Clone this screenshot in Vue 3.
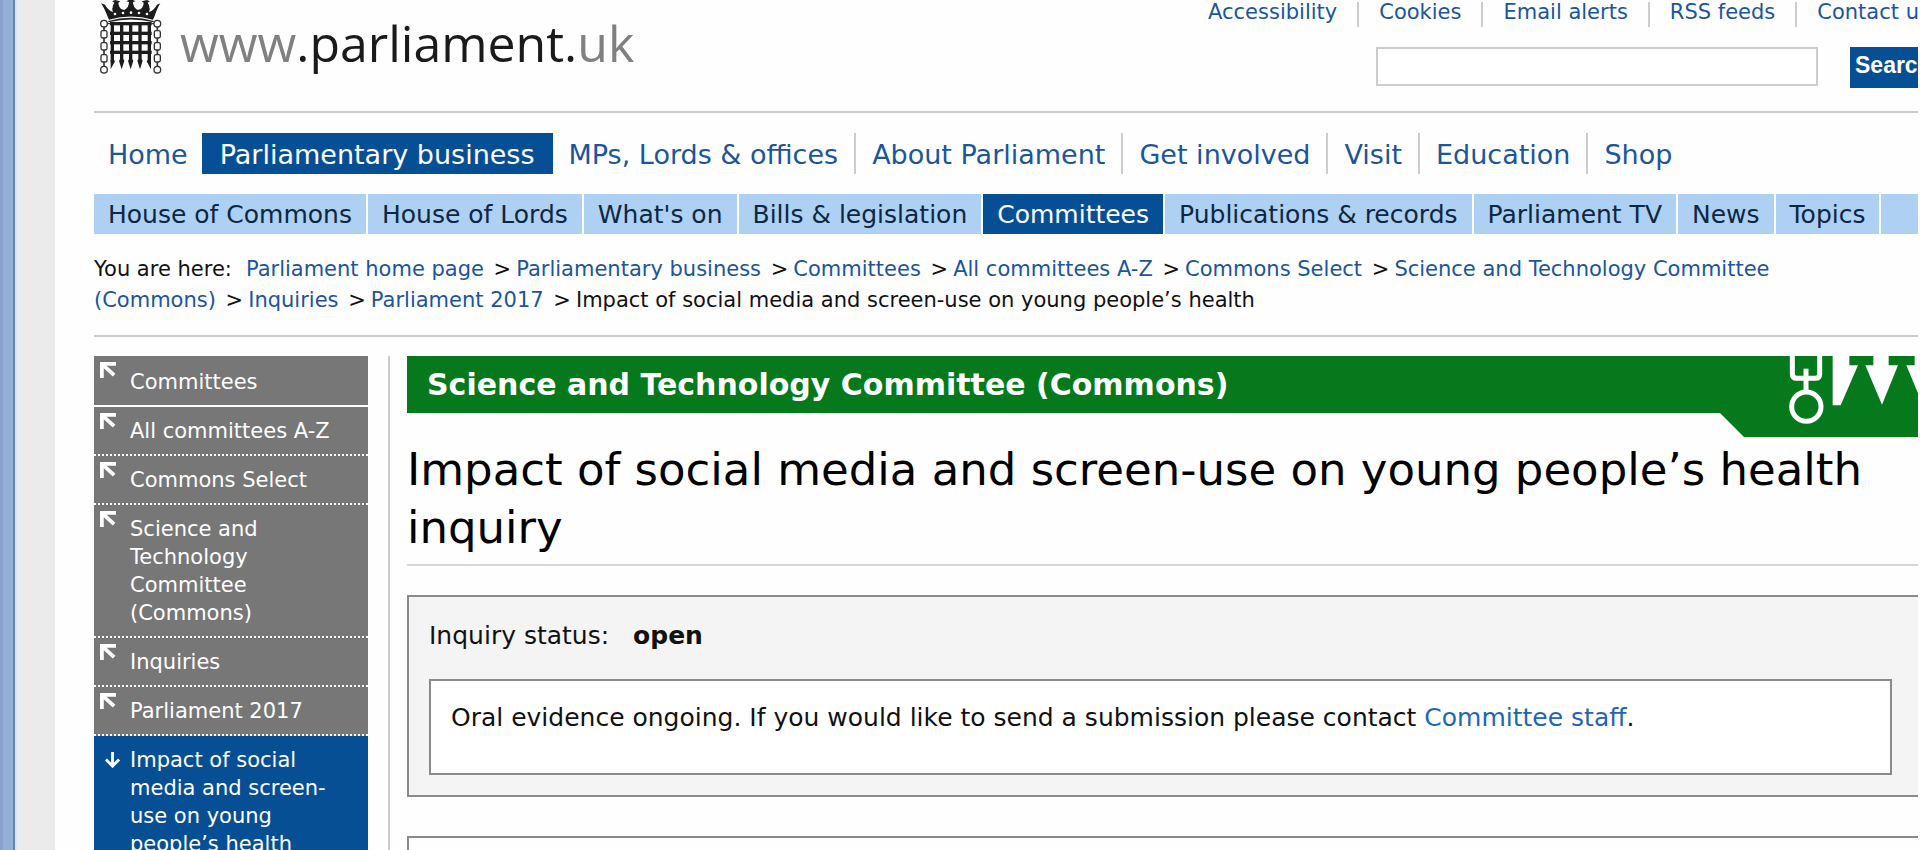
<script setup>
const topLinks = ['Accessibility', 'Cookies', 'Email alerts', 'RSS feeds', 'Contact us']

const mainNav = [
  { label: 'Home' },
  { label: 'Parliamentary business', active: true },
  { label: 'MPs, Lords & offices' },
  { label: 'About Parliament' },
  { label: 'Get involved' },
  { label: 'Visit' },
  { label: 'Education' },
  { label: 'Shop' },
]

const subNav = [
  { label: 'House of Commons' },
  { label: 'House of Lords' },
  { label: "What's on" },
  { label: 'Bills & legislation' },
  { label: 'Committees', active: true },
  { label: 'Publications & records' },
  { label: 'Parliament TV' },
  { label: 'News' },
  { label: 'Topics' },
]

const crumbs = [
  'Parliament home page',
  'Parliamentary business',
  'Committees',
  'All committees A-Z',
  'Commons Select',
  'Science and Technology Committee (Commons)',
  'Inquiries',
  'Parliament 2017',
]

const sideLinks = [
  'Committees',
  'All committees A-Z',
  'Commons Select',
  'Science and Technology Committee (Commons)',
  'Inquiries',
  'Parliament 2017',
]

const barXs = [96, 124, 151, 179, 207]
const railYs = [71, 100, 128, 157]
const chainXs = [71, 231]
const linkYs = [103, 139, 175]
</script>

<template>
  <div class="page">
    <div class="edge" aria-hidden="true"></div>
    <div class="content">
      <header class="header">
        <a class="logo" href="#" aria-label="www.parliament.uk">
          <svg class="crest" viewBox="56 0 192 222" aria-hidden="true">
            <g fill="#1c1c1c">
              <path d="M62 10 Q70 20 82 50 Q84 55 86 59 Q152 40 218 59 Q220 55 222 50 Q232 22 240 10 L230 14 Q222 30 206 36 Q212 24 202 8 L208 4 L200 0 L184 4 L190 8 Q190 26 172 30 Q158 22 158 6 L166 4 L158 0 L145 0 L138 4 L146 6 Q146 22 132 30 Q114 26 114 8 L120 4 L104 0 L96 4 L102 8 Q92 24 98 36 Q82 30 74 14 Z" />
              <path d="M84 63 Q152 44 220 63 L220 67 Q152 50 84 67 Z" />
            </g>
            <g fill="#fff">
              <circle cx="124" cy="12" r="6" />
              <circle cx="180" cy="12" r="6" />
              <circle cx="90" cy="22" r="6" />
              <circle cx="214" cy="22" r="6" />
              <circle cx="104" cy="42" r="4" />
              <circle cx="128" cy="39" r="4" />
              <circle cx="152" cy="38" r="4" />
              <circle cx="176" cy="39" r="4" />
              <circle cx="200" cy="42" r="4" />
            </g>
            <g fill="#1c1c1c">
              <rect v-for="y in railYs" :key="'r' + y" x="89" :y="y - 5" width="125" height="10" />
              <rect v-for="x in barXs" :key="'b' + x" :x="x - 5" y="66" width="10" height="122" />
              <path v-for="x in barXs.slice(1, 4)" :key="'s' + x" :d="`M${x - 8} 182 L${x - 5} 178 H${x + 5} L${x + 8} 182 L${x} 208 Z`" />
              <path d="M91 180 H101 L104 184 L91 208 Z M212 180 H202 L199 184 L212 208 Z" />
            </g>
            <g fill="none" stroke="#333" stroke-width="4">
              <template v-for="x in chainXs" :key="'c' + x">
                <circle :cx="x" cy="71" r="10" />
                <rect v-for="y in linkYs" :key="y" :x="x - 9" :y="y - 11" width="18" height="22" rx="5" />
                <circle :cx="x" cy="209" r="10" />
                <path :d="`M${x} 80 V93 M${x} 113 V129 M${x} 149 V165 M${x} 185 V200`" stroke-width="5" />
              </template>
              <path d="M81 71 H90 M213 71 H221" />
            </g>
          </svg>
          <span class="wordmark"><span class="pale">www</span>.parliament.<span class="pale">uk</span></span>
        </a>
        <div class="tools">
          <nav aria-label="Site tools">
            <ul class="top-links">
              <li v-for="t in topLinks" :key="t"><a href="#">{{ t }}</a></li>
            </ul>
          </nav>
          <form class="search" @submit.prevent>
            <input type="search" aria-label="Search" />
            <button type="submit">Search</button>
          </form>
        </div>
      </header>

      <nav aria-label="Main">
        <ul class="main-nav">
          <li v-for="n in mainNav" :key="n.label" :class="{ active: n.active }"><a href="#">{{ n.label }}</a></li>
        </ul>
      </nav>
      <nav aria-label="Section">
        <ul class="sub-nav">
          <li v-for="n in subNav" :key="n.label" :class="{ active: n.active }"><a href="#">{{ n.label }}</a></li>
        </ul>
      </nav>

      <nav class="crumbs" aria-label="Breadcrumb">
        <span class="here">You are here:</span>
        <template v-for="c in crumbs" :key="c"><a href="#">{{ c }}</a> <span class="sep">&gt;</span></template><span>Impact of social media and screen-use on young people’s health</span>
      </nav>

      <div class="columns">
        <nav class="side" aria-label="In this section">
          <ul>
            <li v-for="s in sideLinks" :key="s">
              <svg class="up" viewBox="0 0 17 17" aria-hidden="true">
                <path d="M2 17 V2 H17 M3 3 L15 14" fill="none" stroke="#fff" stroke-width="4" />
              </svg>
              <a href="#">{{ s }}</a>
            </li>
            <li class="current">
              <svg class="down" viewBox="0 0 17 17" aria-hidden="true">
                <path d="M8 0 V15 M1 8 L8 15 L15 8" fill="none" stroke="#fff" stroke-width="3" />
              </svg>
              <a href="#">Impact of social media and screen-use on young people’s health</a>
            </li>
          </ul>
        </nav>
        <main class="main">
          <div class="banner">
            <h2>Science and Technology Committee (Commons)</h2>
            <svg class="flag" viewBox="298 48 594 243" aria-hidden="true">
              <path d="M298 48 H892 V291 H370 L298 219 Z" fill="#05791b" />
              <g fill="none" stroke="#fff" stroke-width="15">
                <path d="M515 48 V102 Q515 115 528 115 H584 Q597 115 597 102 V48" />
                <path d="M556 86 V152" />
                <circle cx="557" cy="200" r="44" />
              </g>
              <path d="M636 48 H686 V76 H712 L660 196 H636 Z M758 48 H804 V76 H832 L784 194 L734 76 H758 Z M882 48 H892 V160 L857 76 H882 Z" fill="#fff" />
            </svg>
          </div>
          <h1>Impact of social media and screen-use on young people’s health inquiry</h1>
          <section class="status">
            <p>Inquiry status: <strong>open</strong></p>
            <div class="note">
              Oral evidence ongoing. If you would like to send a submission please contact <a href="#">Committee staff</a>.
            </div>
          </section>
          <section class="next"></section>
        </main>
      </div>
    </div>
  </div>
</template>

<style>
body {
  margin: 0;
  background: #fff;
}
</style>

<style scoped>
.page {
  display: flex;
  height: 100vh;
  overflow: hidden;
  background: #fefefe;
  color: #111;
  font-family: "DejaVu Sans", Verdana, sans-serif;
}
a {
  color: #1b559c;
  text-decoration: none;
}
ul {
  margin: 0;
  padding: 0;
  list-style: none;
}
.edge {
  flex: 0 0 55px;
  background: linear-gradient(to right, #86a2cc 0 3px, #96b0d5 3px 13px, #6283b5 13px 15px, #dfe5ee 15px 17px, #ebebeb 17px);
}
.content {
  flex: 1;
  min-width: 0;
  padding: 0 2px 0 39px;
}
.header {
  display: flex;
  justify-content: space-between;
  height: 111px;
  border-bottom: 2px solid #ccc;
}
.logo {
  display: flex;
  gap: 17px;
  margin-left: 5px;
  color: #1a1a1a;
}
.crest {
  width: 64px;
  height: 74px;
}
.wordmark {
  font-family: "Open Sans", "Noto Sans", sans-serif;
  font-size: 50px;
  line-height: 87px;
}
.pale {
  color: #808080;
}
.tools {
  flex: 0 0 730px;
  min-width: 0;
  overflow: hidden;
}
.top-links {
  display: flex;
  padding-top: 2px;
  font-size: 21px;
  line-height: 20px;
  white-space: nowrap;
}
.top-links li {
  padding: 0 20px 5px;
  border-right: 2px solid #ccc;
}
.search {
  display: flex;
  gap: 32px;
  margin: 20px 0 0 188px;
}
.search input {
  flex: 0 0 442px;
  box-sizing: border-box;
  height: 39px;
  border: 2px solid #ccc;
  background: #fff;
}
.search button {
  flex: none;
  height: 41px;
  padding: 0 5px 4px;
  border: 0;
  background: #074f95;
  color: #fff;
  font: bold 23px "Liberation Sans", Arial, sans-serif;
}
.main-nav,
.sub-nav {
  display: flex;
  white-space: nowrap;
}
.main-nav {
  margin-top: 20px;
  font-size: 27px;
  line-height: 39px;
}
.main-nav li {
  padding: 2px 16px 0;
  border-right: 2px solid #ccc;
}
.main-nav li:first-child {
  padding: 2px 14px 0;
  border-right: 0;
}
.main-nav li.active {
  padding: 2px 18px 0;
  border-right: 0;
  background: #074f95;
}
.main-nav li:last-child {
  border-right: 0;
}
.sub-nav {
  margin-top: 20px;
  background: #aed0f3;
  font-size: 25px;
  line-height: 39px;
}
.sub-nav li {
  padding: 1px 14px 0;
  border-right: 2px solid #fff;
}
.sub-nav a {
  color: #0c2744;
}
.sub-nav .active {
  background: #074f95;
}
.main-nav .active a,
.sub-nav .active a {
  color: #fff;
}
.crumbs {
  padding: 20px 40px 19px 0;
  border-bottom: 2px solid #ccc;
  font-size: 21px;
  line-height: 31px;
}
.here {
  margin-right: 14px;
}
.sep {
  margin: 0 5px 0 3px;
}
.columns {
  display: flex;
  margin-top: 19px;
}
.side {
  flex: 0 0 274px;
  font-size: 21px;
  line-height: 28px;
}
.side li {
  position: relative;
  padding: 10px 14px 9px 36px;
  border-bottom: 2px dotted #fff;
  background: #777;
}
.side li:first-child {
  padding-top: 12px;
  border-bottom-style: solid;
}
.side li.current {
  border: 0;
  background: #074f95;
}
.side a {
  color: #fff;
}
.up,
.down {
  position: absolute;
  top: 6px;
  left: 6px;
  width: 16px;
  height: 16px;
}
.down {
  top: 16px;
  left: 11px;
}
.main {
  flex: 1;
  min-width: 0;
  min-height: 600px;
  margin-left: 20px;
  padding-left: 17px;
  border-left: 2px solid #ccc;
}
.banner {
  position: relative;
  background: #05791b;
}
.banner h2 {
  margin: 0;
  padding: 0 20px;
  color: #fff;
  font-size: 30px;
  line-height: 57px;
}
.flag {
  position: absolute;
  top: 0;
  right: 0;
  width: 198px;
  height: 81px;
}
h1 {
  margin: 28px 0 29px;
  padding-bottom: 7px;
  border-bottom: 2px solid #d8d8d8;
  color: #000;
  font-size: 45px;
  font-weight: 400;
  line-height: 58px;
}
.status {
  padding: 24px 26px 20px 20px;
  border: 2px solid #8a8a8a;
  border-right: 0;
  background: #f4f4f4;
  font-size: 25px;
  line-height: 30px;
}
.status p {
  margin: 0 0 28px;
}
.status strong {
  margin-left: 16px;
}
.note {
  padding: 22px 20px 40px;
  border: 2px solid #8a8a8a;
  background: #fff;
}
.note a {
  color: #1f66b0;
}
.next {
  height: 80px;
  margin-top: 39px;
  border: 2px solid #8a8a8a;
  border-right: 0;
}
</style>
